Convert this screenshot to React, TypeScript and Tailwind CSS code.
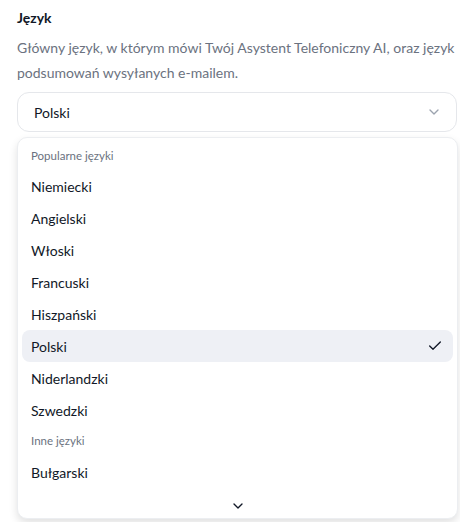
import React from "react";

const Chevron = ({ className }: { className?: string }) => (
  <svg viewBox="0 0 24 24" fill="none" stroke="currentColor" strokeWidth={2} strokeLinecap="round" strokeLinejoin="round" className={className}>
    <path d="m6 9 6 6 6-6" />
  </svg>
);

const Check = ({ className }: { className?: string }) => (
  <svg viewBox="0 0 24 24" fill="none" stroke="currentColor" strokeWidth={2} strokeLinecap="round" strokeLinejoin="round" className={className}>
    <path d="M20 6 9 17l-5-5" />
  </svg>
);

const popular = ["Niemiecki", "Angielski", "Włoski", "Francuski", "Hiszpański", "Polski", "Niderlandzki", "Szwedzki"];

export default function App() {
  return (
    <div className="w-[460px] h-[522px] bg-white overflow-hidden pl-[17px] pr-[3px] pt-[8px]" style={{ fontFamily: 'Lato, "Open Sans", sans-serif' }}>
      <h3 className="text-[14px] font-bold text-[#111827] leading-[20px]">Język</h3>
      <p className="mt-[7px] w-[443px] text-[14px] leading-[25px] text-[#6b7280]">
        Główny język, w którym mówi Twój Asystent Telefoniczny AI, oraz język podsumowań wysyłanych e-mailem.
      </p>
      <div className="mt-[7px] h-[40px] rounded-[12px] border border-[#e5e7eb] flex items-center justify-between pl-[16px] pr-[14px]">
        <span className="text-[14px] text-[#111827]">Polski</span>
        <Chevron className="w-[16px] h-[16px] text-[#9ca3af]" />
      </div>
      <div className="mt-[5px] mr-[-1px] h-[382px] rounded-[10px] border border-[#eceef1] bg-white shadow-[0_4px_8px_rgba(0,0,0,0.12)] px-[4px] pt-[4px] flex flex-col overflow-hidden">
        <div className="h-[28px] flex items-center pl-[9px] text-[11.5px] text-[#6b7280]">Popularne języki</div>
        {popular.map((l) => (
          <div
            key={l}
            className={`h-[32px] flex items-center justify-between pl-[9px] pr-[10px] rounded-[8px] text-[14px] text-[#111827] ${l === "Polski" ? "bg-[#eef0f5]" : ""}`}
          >
            <span>{l}</span>
            {l === "Polski" && <Check className="w-[16px] h-[16px] text-[#111827]" />}
          </div>
        ))}
        <div className="h-[30px] flex items-center pl-[9px] text-[11.5px] text-[#6b7280]">Inne języki</div>
        <div className="h-[32px] flex items-center pl-[9px] text-[14px] text-[#111827]">Bułgarski</div>
        <div className="flex-1" />
        <div className="h-[24px] flex items-center justify-center">
          <Chevron className="w-[16px] h-[16px] text-[#111827]" />
        </div>
      </div>
    </div>
  );
}
